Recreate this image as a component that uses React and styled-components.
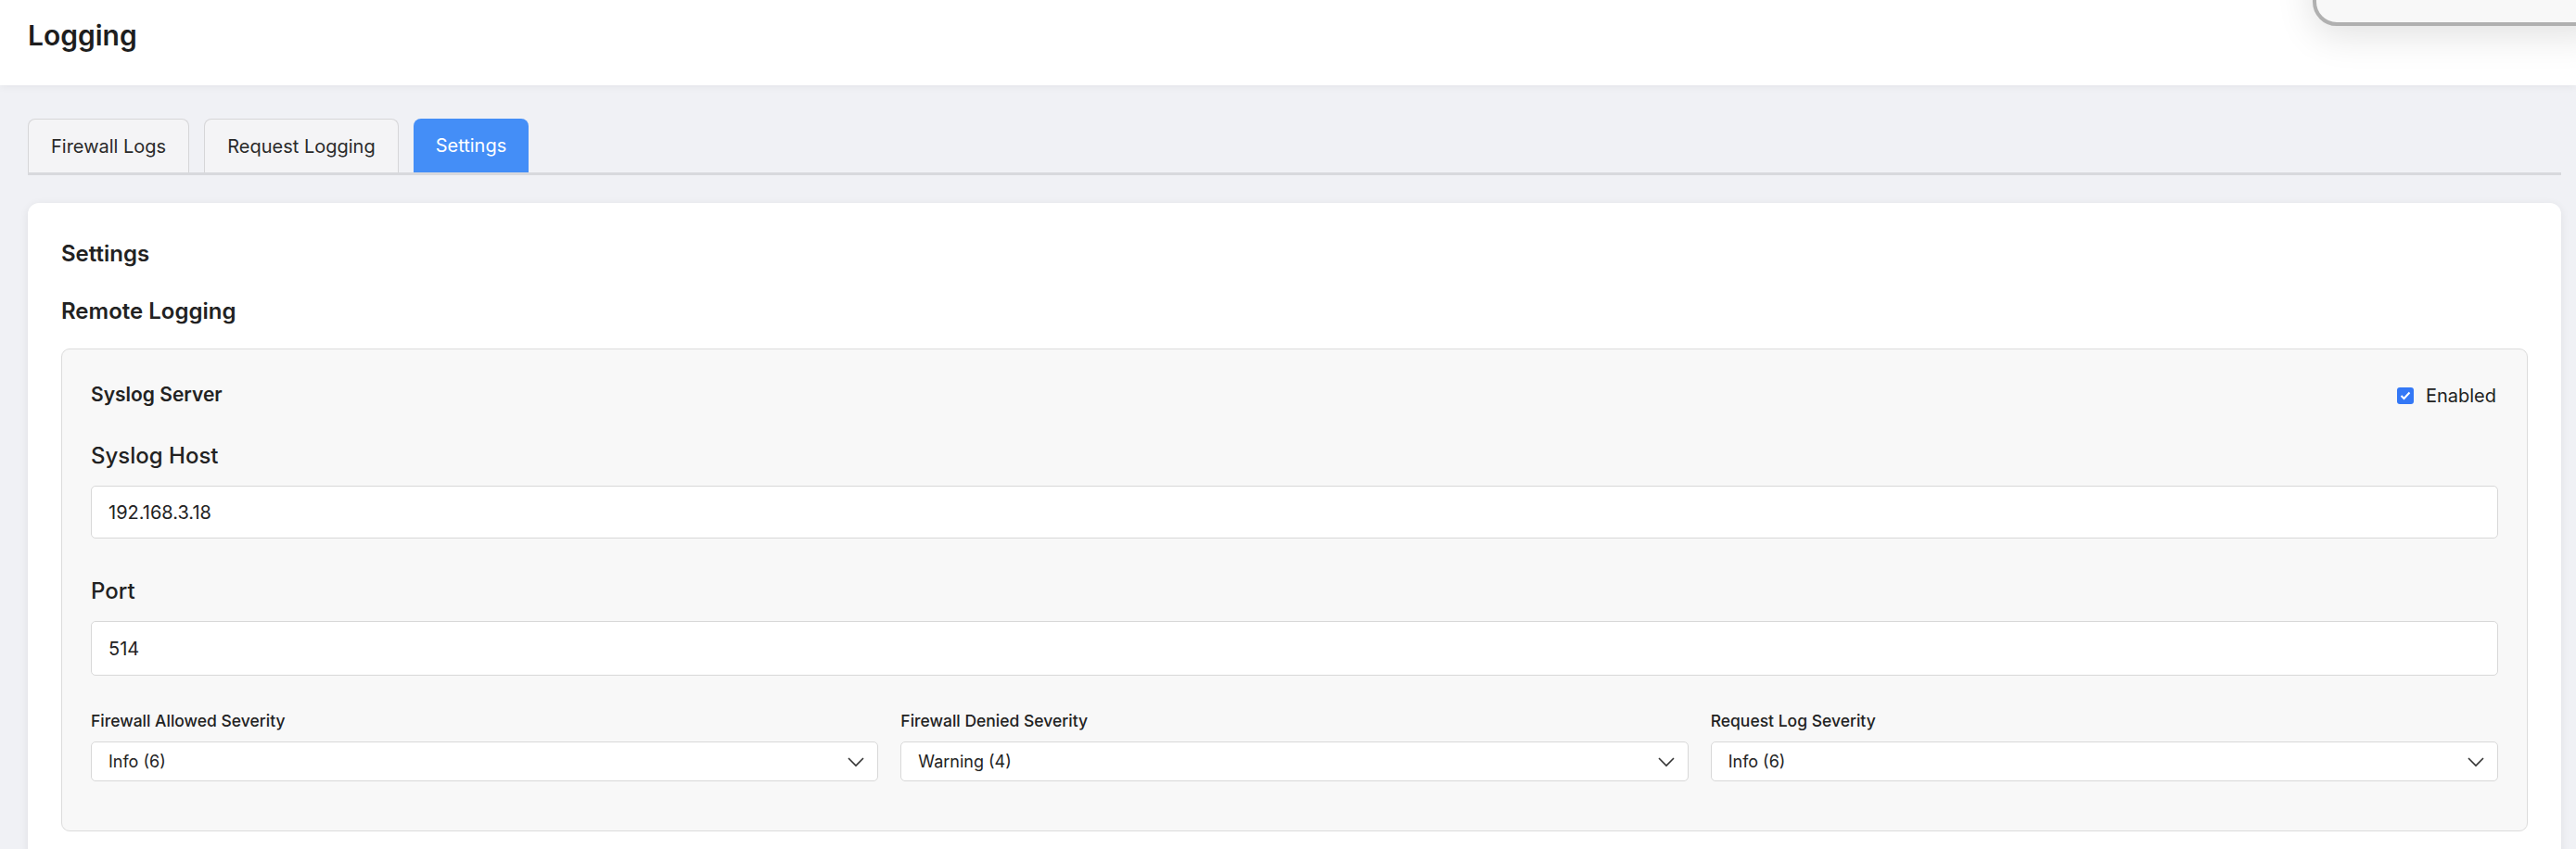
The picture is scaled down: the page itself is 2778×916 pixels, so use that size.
import React from "react";
import styled, { createGlobalStyle } from "styled-components";

const Global = createGlobalStyle`
  html, body { margin: 0; padding: 0; background: #f0f1f5; }
  body { font-family: Inter, "Noto Sans", sans-serif; color: #222; }
  * { box-sizing: border-box; }
`;

const Header = styled.header`
  height: 92px;
  background: #fff;
  padding: 0 30px;
  display: flex;
  align-items: center;
  box-shadow: 0 2px 8px rgba(0,0,0,0.05);
  position: relative;
`;
const Title = styled.h1`
  margin: 0 0 16px;
  font-size: 30px;
  font-weight: 600;
  color: #1e1e1e;
`;
const Overlay = styled.div`
  position: absolute;
  left: 2494px;
  top: -60px;
  width: 320px;
  height: 88px;
  border: 4px solid #b0b0b0;
  border-radius: 26px;
  background: #f8f8f8;
  box-shadow: 0 10px 40px rgba(0,0,0,0.12);
`;
const Main = styled.main`
  padding: 36px 16px 0 30px;
`;
const Tabs = styled.div`
  display: flex;
  gap: 16px;
  border-bottom: 3px solid #d8d9dd;
  height: 61px;
`;
const Tab = styled.div`
  height: 58px;
  padding: 0 24px;
  display: flex;
  align-items: center;
  font-size: 20px;
  border-radius: 8px 8px 0 0;
  border: ${p => (p.$active ? "none" : "1px solid #d6d6d8")};
  border-bottom: none;
  background: ${p => (p.$active ? "#448ef7" : "#f4f4f6")};
  color: ${p => (p.$active ? "#fff" : "#2a2a2a")};
`;
const Card = styled.section`
  margin-top: 30px;
  background: #fff;
  border-radius: 12px;
  box-shadow: 0 2px 10px rgba(0,0,0,0.08);
  padding: 37px 36px 40px;
`;
const H2 = styled.h2`
  margin: 0;
  font-size: 24px;
  line-height: 36px;
  font-weight: 600;
`;
const H3 = styled(H2)`
  margin-top: 26px;
`;
const Panel = styled.div`
  margin-top: 22px;
  background: #f8f8f8;
  border: 1px solid #dcdcdc;
  border-radius: 9px;
  padding: 34px 31px 53px 31px;
`;
const PanelHead = styled.div`
  display: flex;
  justify-content: space-between;
  align-items: center;
  height: 28px;
`;
const PanelTitle = styled.div`
  font-size: 21px;
  font-weight: 600;
`;
const Check = styled.label`
  display: flex;
  align-items: center;
  gap: 13px;
  font-size: 20px;
  margin-right: 2px;
  margin-top: 4px;
`;
const Box = styled.span`
  width: 18px;
  height: 18px;
  border-radius: 3px;
  background: #3478f6;
  display: flex;
  align-items: center;
  justify-content: center;
`;
const Label = styled.div`
  font-size: 24px;
  font-weight: 500;
  line-height: 30px;
  margin-top: ${p => p.$mt}px;
`;
const Input = styled.div`
  margin-top: 17px;
  height: ${p => p.$h}px;
  background: #fff;
  border: 1px solid #d8d8d8;
  border-radius: 5px;
  display: flex;
  align-items: center;
  padding: 0 18px;
  font-size: 20px;
`;
const Grid = styled.div`
  margin-top: 38px;
  display: grid;
  grid-template-columns: repeat(3, 1fr);
  gap: 24px;
`;
const SmallLabel = styled.div`
  font-size: 17.5px;
  font-weight: 500;
  line-height: 22px;
`;
const Select = styled.div`
  margin-top: 11px;
  height: 43px;
  background: #fff;
  border: 1px solid #d8d8d8;
  border-radius: 5px;
  display: flex;
  align-items: center;
  justify-content: space-between;
  padding: 0 14px 0 18px;
  font-size: 18px;
`;

const Chevron = () => (
  <svg width="18" height="12" viewBox="0 0 18 12" fill="none">
    <path d="M1 2l8 8 8-8" stroke="#333" strokeWidth="1.6" />
  </svg>
);

const sev = [
  ["Firewall Allowed Severity", "Info (6)"],
  ["Firewall Denied Severity", "Warning (4)"],
  ["Request Log Severity", "Info (6)"],
];

export default function App() {
  return (
    <>
      <Global />
      <Header>
        <Title>Logging</Title>
        <Overlay />
      </Header>
      <Main>
        <Tabs>
          <Tab>Firewall Logs</Tab>
          <Tab>Request Logging</Tab>
          <Tab $active>Settings</Tab>
        </Tabs>
        <Card>
          <H2>Settings</H2>
          <H3>Remote Logging</H3>
          <Panel>
            <PanelHead>
              <PanelTitle>Syslog Server</PanelTitle>
              <Check>
                <Box>
                  <svg width="12" height="10" viewBox="0 0 12 10">
                    <path d="M1.5 5l3 3 6-6.5" stroke="#fff" strokeWidth="2" fill="none" />
                  </svg>
                </Box>
                Enabled
              </Check>
            </PanelHead>
            <Label $mt={38}>Syslog Host</Label>
            <Input $h={57}>192.168.3.18</Input>
            <Label $mt={42}>Port</Label>
            <Input $h={59}>514</Input>
            <Grid>
              {sev.map(([l, v]) => (
                <div key={l}>
                  <SmallLabel>{l}</SmallLabel>
                  <Select>
                    {v}
                    <Chevron />
                  </Select>
                </div>
              ))}
            </Grid>
          </Panel>
        </Card>
      </Main>
    </>
  );
}
